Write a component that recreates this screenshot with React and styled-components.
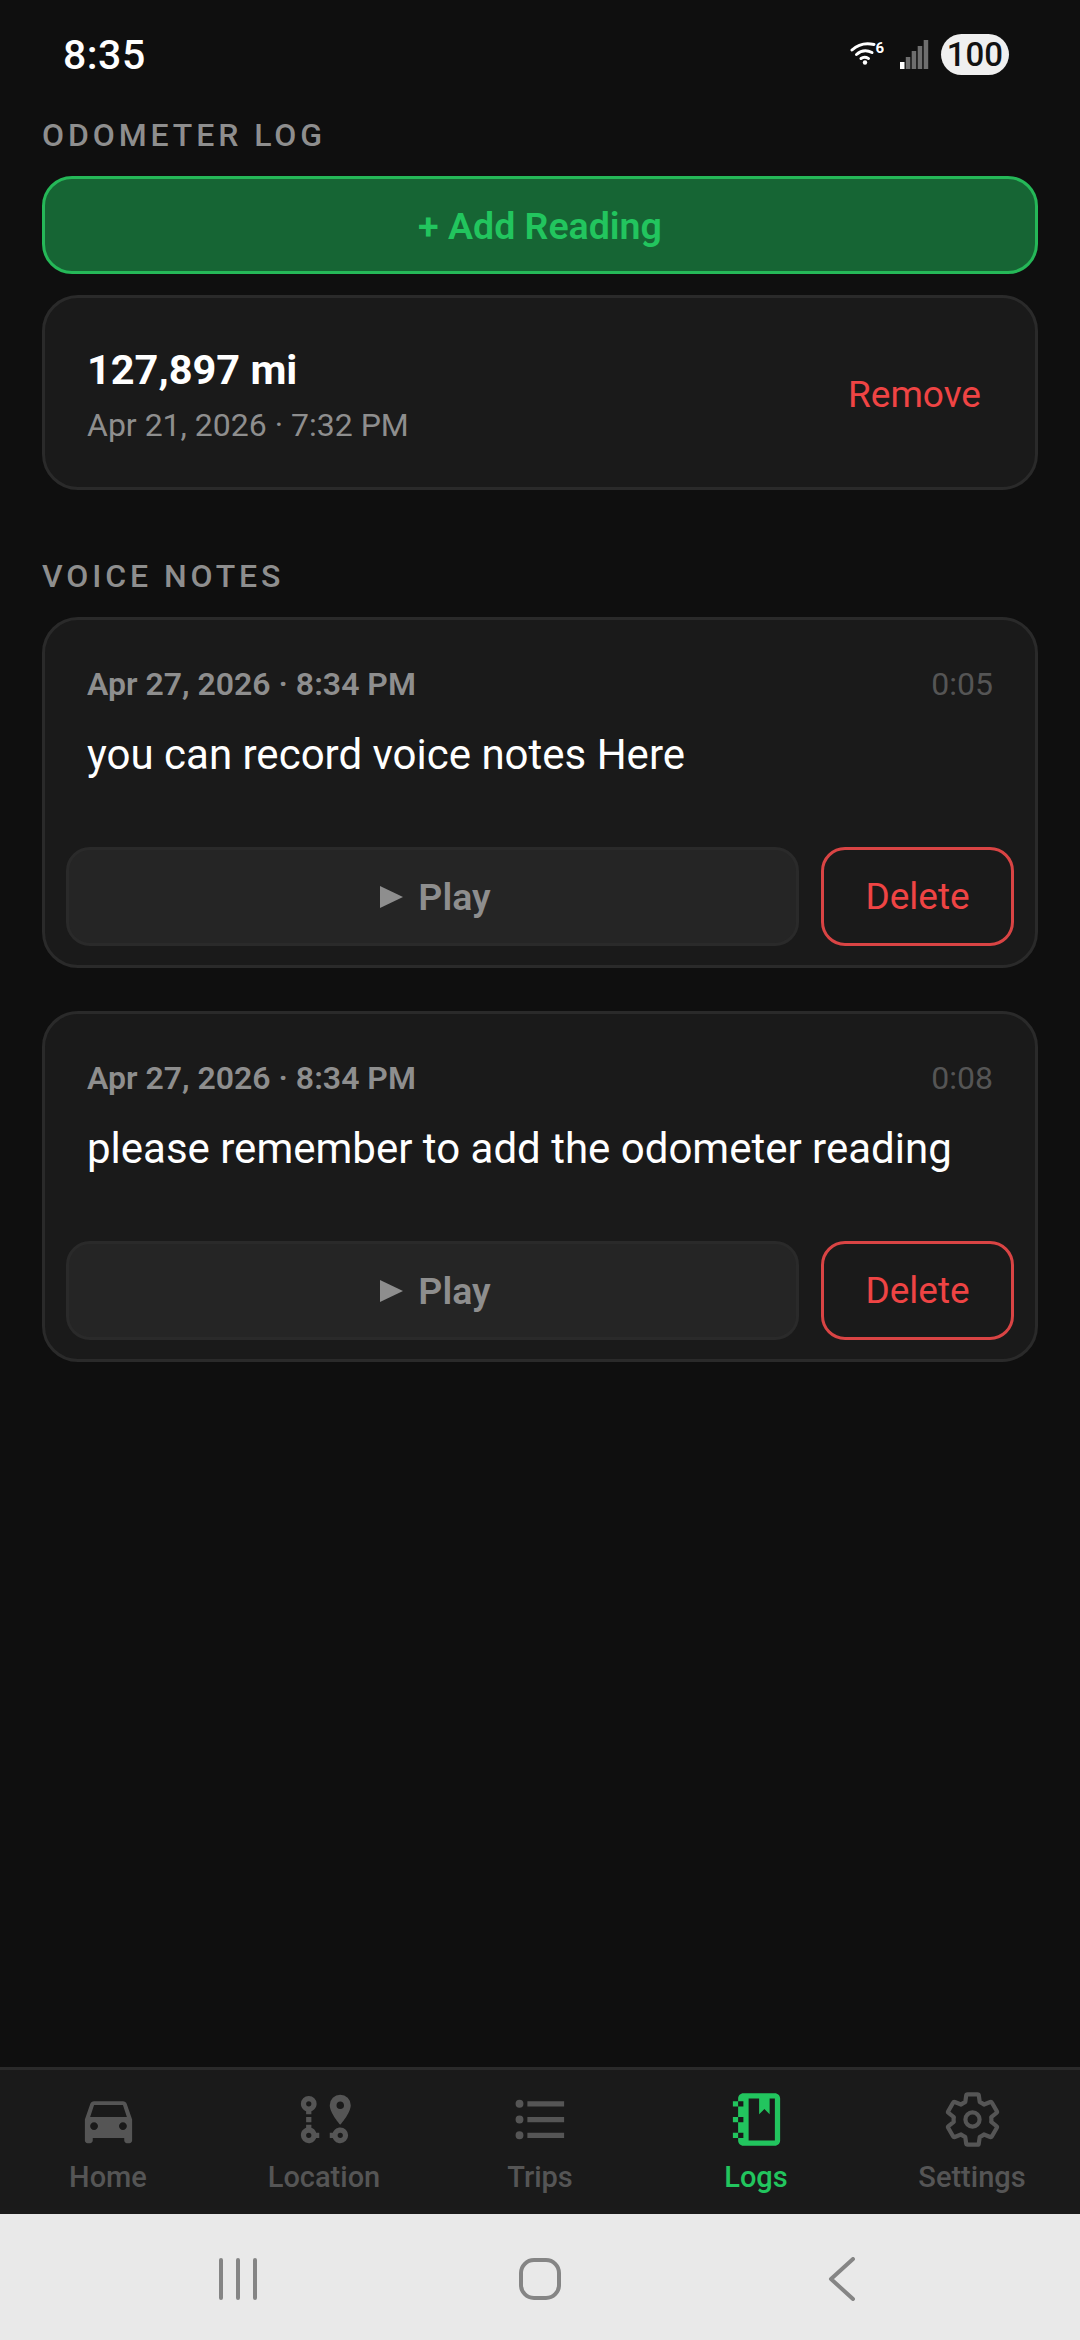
import React from 'react';
import styled, { createGlobalStyle } from 'styled-components';

const Global = createGlobalStyle`
  html, body { margin: 0; padding: 0; background: #0f0f0f; }
  * { box-sizing: border-box; }
  body { font-family: Roboto, "Noto Sans", sans-serif; }
`;

const Screen = styled.div`
  width: 1080px; height: 2340px; display: flex; flex-direction: column;
  background: #0f0f0f; overflow: hidden;
`;
const StatusBar = styled.div`
  height: 108px; flex: none; display: flex; align-items: center; justify-content: space-between;
  padding: 0 71px 0 63px;
`;
const Clock = styled.div`
  color: #fff; font-size: 41px; font-weight: 500; letter-spacing: 0.5px; padding-top: 2px;
`;
const StatusIcons = styled.div`
  display: flex; align-items: center; gap: 12px;
`;
const WifiIcon = styled.svg`
  margin-right: 4px; display: block;
`;
const SixMark = styled.text`
  font: 700 15px Roboto, sans-serif; fill: #fff;
`;
const Battery = styled.div`
  width: 68px; height: 41px; border-radius: 21px; background: #efefef; color: #111;
  font-size: 33px; font-weight: 500; display: flex; align-items: center; justify-content: center;
`;
const Content = styled.main`
  flex: 1; min-height: 0; padding: 0 42px; display: flex; flex-direction: column;
`;
const SectionTitle = styled.h2`
  margin: 0; font-size: 32px; line-height: 36px; height: 36px; font-weight: 500; letter-spacing: 3.9px;
  color: #8e8e8e; margin-top: ${p => p.$top}px; margin-bottom: 23px;
`;
const AddButton = styled.button`
  height: 98px; flex: none; width: 100%; border-radius: 30px; border: 3px solid #25b858; background: #166534;
  color: #22c55e; font: 600 37.5px Roboto, sans-serif; padding: 2px 0 0;
`;
const Card = styled.section`
  flex: none; background: #1a1a1a; border: 3px solid #2a2a2a; border-radius: 36px;
`;
const ReadingCard = styled(Card)`
  margin-top: 21px; height: 195px; display: flex; align-items: center; justify-content: space-between;
  padding: 3px 54px 0 42px;
`;
const ReadingInfo = styled.div`
  padding-top: 4px;
`;
const ReadingValue = styled.div`
  color: #fff; font-size: 41.5px; line-height: 48px; font-weight: 700;
`;
const ReadingDate = styled.div`
  color: #8e8e8e; font-size: 32px; line-height: 42px; margin-top: 10px;
`;
const Remove = styled.div`
  color: #ef4444; font-size: 37px; font-weight: 400;
`;
const NoteCard = styled(Card)`
  height: 351px; padding: 43px 21px 0; margin-bottom: ${p => p.$gap}px; display: flex; flex-direction: column;
`;
const NoteHead = styled.div`
  display: flex; justify-content: space-between; align-items: center; padding: 0 21px; height: 42px;
`;
const NoteDate = styled.div`
  color: #8e8e8e; font-size: 32px; font-weight: 600;
`;
const NoteLen = styled.div`
  color: #555; font-size: 32px;
`;
const NoteText = styled.p`
  margin: 23px 21px 0; color: #fff; font-size: 42px; line-height: 54px; flex: 1;
`;
const NoteActions = styled.div`
  display: flex; gap: 22px; padding-bottom: 19px;
`;
const PlayButton = styled.button`
  flex: 1; height: 99px; border-radius: 24px; border: 3px solid #2a2a2a; background: #252525;
  color: #8e8e8e; font: 600 37.5px Roboto, sans-serif; padding: 0 0 0 6px;
  display: flex; align-items: center; justify-content: center; gap: 15px;
`;
const DeleteButton = styled.button`
  width: 193px; height: 99px; flex: none; border-radius: 24px; border: 3px solid #d94444; background: transparent;
  color: #ef4444; font: 400 37px Roboto, sans-serif; padding: 0;
`;
const BottomNav = styled.nav`
  height: 147px; flex: none; display: flex; background: #1a1a1a; border-top: 3px solid #2a2a2a;
`;
const NavItem = styled.div`
  flex: 1; display: flex; flex-direction: column; align-items: center; padding-top: 18px;
  color: ${p => (p.$active ? '#22c55e' : '#555555')};
`;
const NavIcon = styled.svg`
  width: 63px; height: 63px; display: block; fill: currentColor;
`;
const NavLabel = styled.div`
  font-size: 29px; line-height: 36px; font-weight: 500; margin-top: 8px;
`;
const SystemNav = styled.div`
  height: 126px; flex: none; background: #e9e9e9; display: flex; align-items: center; justify-content: center;
  padding-top: 4px;
`;
const SystemSlot = styled.div`
  width: 302px; display: flex; align-items: center; justify-content: center;
`;

const Wifi = () => (
  <WifiIcon width="34" height="29" viewBox="0 0 34 29" fill="none" stroke="#fff" strokeLinecap="round">
    <path d="M2 10C8 4.5 16 2.5 24 4.5" strokeWidth="3" />
    <path d="M6.5 14.5C11 10.5 17 10 22 12.5" strokeWidth="3" />
    <path d="M11 18.5C13 17 16 17 18.5 18.5" strokeWidth="3" />
    <circle cx="15" cy="22.5" r="2.2" fill="#fff" stroke="none" />
    <SixMark x="25.5" y="13" stroke="none">6</SixMark>
  </WifiIcon>
);
const Signal = () => (
  <svg width="29" height="29" viewBox="0 0 29 29">
    <rect x="0" y="22" width="4.5" height="7" fill="#fff" />
    <rect x="5.8" y="17" width="4.5" height="12" fill="#6e6e6e" />
    <rect x="11.7" y="11" width="4.5" height="18" fill="#6e6e6e" />
    <rect x="17.7" y="6" width="4.5" height="23" fill="#6e6e6e" />
    <rect x="23.7" y="0" width="4.5" height="29" fill="#6e6e6e" />
  </svg>
);
const PlayGlyph = () => (
  <svg width="23" height="22" viewBox="0 0 23 22"><path d="M0 0L23 11L0 22Z" fill="#8e8e8e" /></svg>
);

const icons = {
  Home: <path d="M18.92 6.01C18.72 5.42 18.16 5 17.5 5h-11c-.66 0-1.21.42-1.42 1.01L3 12v8c0 .55.45 1 1 1h1c.55 0 1-.45 1-1v-1h12v1c0 .55.45 1 1 1h1c.55 0 1-.45 1-1v-8l-2.08-5.99zM6.5 16c-.83 0-1.5-.67-1.5-1.5S5.67 13 6.5 13s1.5.67 1.5 1.5S7.33 16 6.5 16zm11 0c-.83 0-1.5-.67-1.5-1.5s.67-1.5 1.5-1.5 1.5.67 1.5 1.5-.67 1.5-1.5 1.5zM5 11l1.5-4.5h11L19 11H5z" />,
  Location: <path d="M18,15A3,3 0 0,1 21,18A3,3 0 0,1 18,21C16.69,21 15.58,20.17 15.17,19H14V17H15.17C15.58,15.83 16.69,15 18,15M18,17A1,1 0 0,0 17,18A1,1 0 0,0 18,19A1,1 0 0,0 19,18A1,1 0 0,0 18,17M18,8A1.43,1.43 0 0,0 19.43,6.57C19.43,5.78 18.79,5.14 18,5.14C17.21,5.14 16.57,5.78 16.57,6.57A1.43,1.43 0 0,0 18,8M18,2.57A4,4 0 0,1 22,6.57C22,9.56 18,14 18,14C18,14 14,9.56 14,6.57A4,4 0 0,1 18,2.57M8.83,17H10V19H8.83C8.42,20.17 7.31,21 6,21A3,3 0 0,1 3,18C3,16.69 3.83,15.58 5,15.17V14H7V15.17C7.85,15.47 8.53,16.15 8.83,17M6,17A1,1 0 0,0 5,18A1,1 0 0,0 6,19A1,1 0 0,0 7,18A1,1 0 0,0 6,17M6,3A3,3 0 0,1 9,6C9,7.31 8.17,8.42 7,8.83V10H5V8.83C3.83,8.42 3,7.31 3,6A3,3 0 0,1 6,3M6,5A1,1 0 0,0 5,6A1,1 0 0,0 6,7A1,1 0 0,0 7,6A1,1 0 0,0 6,5M5,11H7V13H5V11Z" />,
  Trips: <path d="M7,5H21V7H7V5M7,13V11H21V13H7M4,4.5A1.5,1.5 0 0,1 5.5,6A1.5,1.5 0 0,1 4,7.5A1.5,1.5 0 0,1 2.5,6A1.5,1.5 0 0,1 4,4.5M4,10.5A1.5,1.5 0 0,1 5.5,12A1.5,1.5 0 0,1 4,13.5A1.5,1.5 0 0,1 2.5,12A1.5,1.5 0 0,1 4,10.5M7,19V17H21V19H7M4,16.5A1.5,1.5 0 0,1 5.5,18A1.5,1.5 0 0,1 4,19.5A1.5,1.5 0 0,1 2.5,18A1.5,1.5 0 0,1 4,16.5Z" />,
  Logs: <path fillRule="evenodd" d="M7,2H19C20.1,2 21,2.9 21,4V20C21,21.1 20.1,22 19,22H7C5.9,22 5,21.1 5,20V4C5,2.9 5.9,2 7,2ZM9,4H19V20H9ZM5,5H7V7H5ZM5,11H7V13H5ZM5,17H7V19H5ZM3,5H5V7H3ZM3,11H5V13H3ZM3,17H5V19H3ZM13,4H17V10L15,8L13,10Z" />,
  Settings: (
    <g fill="none" stroke="currentColor" strokeWidth="1.6" strokeLinejoin="round">
      <path d="M19.14 12.94c.04-.3.06-.61.06-.94 0-.32-.02-.64-.07-.94l2.03-1.58c.18-.14.23-.41.12-.61l-1.92-3.32c-.12-.22-.37-.29-.59-.22l-2.39.96c-.5-.38-1.03-.7-1.62-.94l-.36-2.54c-.04-.24-.24-.41-.48-.41h-3.84c-.24 0-.43.17-.47.41l-.36 2.54c-.59.24-1.13.57-1.62.94l-2.39-.96c-.22-.08-.47 0-.59.22L2.74 8.87c-.12.21-.08.47.12.61l2.03 1.58c-.05.3-.09.63-.09.94s.02.64.07.94l-2.03 1.58c-.18.14-.23.41-.12.61l1.92 3.32c.12.22.37.29.59.22l2.39-.96c.5.38 1.03.7 1.62.94l.36 2.54c.05.24.24.41.48.41h3.84c.24 0 .44-.17.47-.41l.36-2.54c.59-.24 1.13-.56 1.62-.94l2.39.96c.22.08.47 0 .59-.22l1.92-3.32c.12-.22.07-.47-.12-.61l-2.01-1.58z" />
      <circle cx="12" cy="12" r="2.7" />
    </g>
  ),
};

const notes = [
  { date: 'Apr 27, 2026 · 8:34 PM', len: '0:05', text: 'you can record voice notes Here', gap: 43 },
  { date: 'Apr 27, 2026 · 8:34 PM', len: '0:08', text: 'please remember to add the odometer reading', gap: 0 },
];

export default function App() {
  return (
    <Screen>
      <Global />
      <StatusBar>
        <Clock>8:35</Clock>
        <StatusIcons>
          <Wifi />
          <Signal />
          <Battery>100</Battery>
        </StatusIcons>
      </StatusBar>
      <Content>
        <SectionTitle $top={9}>ODOMETER LOG</SectionTitle>
        <AddButton>+ Add Reading</AddButton>
        <ReadingCard>
          <ReadingInfo>
            <ReadingValue>127,897 mi</ReadingValue>
            <ReadingDate>Apr 21, 2026 · 7:32 PM</ReadingDate>
          </ReadingInfo>
          <Remove>Remove</Remove>
        </ReadingCard>
        <SectionTitle $top={68}>VOICE NOTES</SectionTitle>
        {notes.map((n, i) => (
          <NoteCard key={i} $gap={n.gap}>
            <NoteHead>
              <NoteDate>{n.date}</NoteDate>
              <NoteLen>{n.len}</NoteLen>
            </NoteHead>
            <NoteText>{n.text}</NoteText>
            <NoteActions>
              <PlayButton><PlayGlyph />Play</PlayButton>
              <DeleteButton>Delete</DeleteButton>
            </NoteActions>
          </NoteCard>
        ))}
      </Content>
      <BottomNav>
        {['Home', 'Location', 'Trips', 'Logs', 'Settings'].map(name => (
          <NavItem key={name} $active={name === 'Logs'}>
            <NavIcon viewBox="0 0 24 24">{icons[name]}</NavIcon>
            <NavLabel>{name}</NavLabel>
          </NavItem>
        ))}
      </BottomNav>
      <SystemNav>
        <SystemSlot>
          <svg width="40" height="42" viewBox="0 0 40 42" stroke="#858585" strokeWidth="4" strokeLinecap="round">
            <path d="M3 2V40M20 2V40M37 2V40" />
          </svg>
        </SystemSlot>
        <SystemSlot>
          <svg width="42" height="42" viewBox="0 0 42 42" fill="none" stroke="#858585" strokeWidth="4">
            <rect x="2" y="2" width="38" height="38" rx="13" />
          </svg>
        </SystemSlot>
        <SystemSlot>
          <svg width="28" height="44" viewBox="0 0 28 44" fill="none" stroke="#858585" strokeWidth="4" strokeLinecap="round" strokeLinejoin="round">
            <path d="M25 2L3 22L25 42" />
          </svg>
        </SystemSlot>
      </SystemNav>
    </Screen>
  );
}
